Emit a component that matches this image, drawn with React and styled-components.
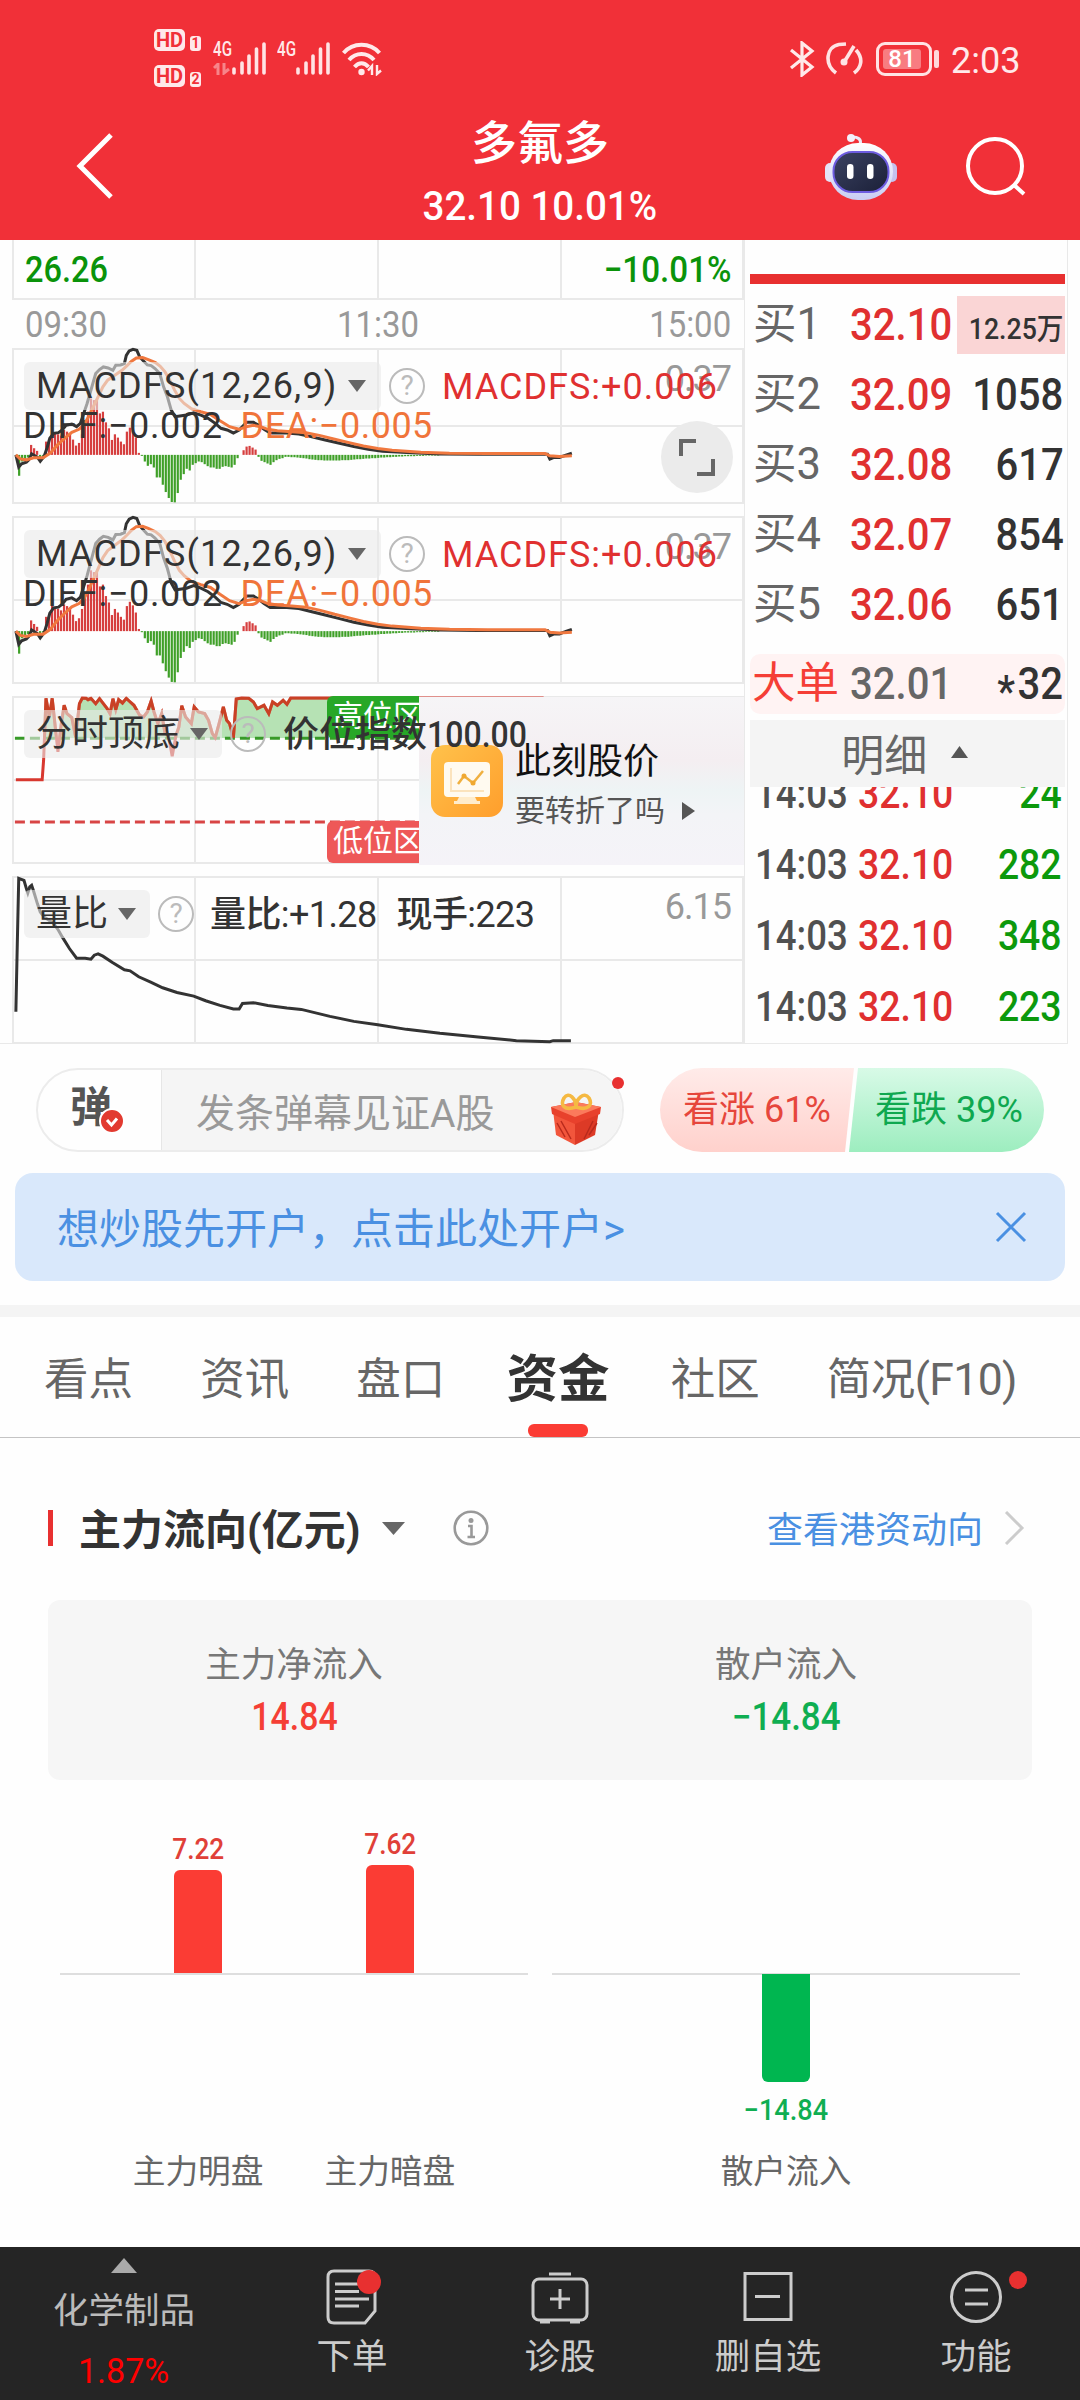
import React from 'react'
import styled, { createGlobalStyle } from 'styled-components'

const GlobalStyle = createGlobalStyle`
    * { box-sizing: border-box; }
    body {
        margin: 0;
        background: #fefefe;
        font-family: Roboto, 'Noto Sans CJK SC', sans-serif;
        color: #333;
    }
    svg { display: block; flex: none; }
`

// bar heights of the MACD histogram, one per minute
const histogram = [
    -8, -63, -20, -15, -8, 30, 20, 12, -8, -3, 40, 48, 93, 66, 62, 58, 75, 70, 64, 46, 28, 36, 62, 105,
    130, 170, 165, 168, 125, 130, 98, 80, 45, 62, 52, 40, 32, 70, 82, 72, 52, 6, -3, -20, -33, -28, -38,
    -68, -68, -90, -112, -130, -142, -143, -115, -75, -58, -42, -47, -30, -25, -20, -22, -28, -34, -38,
    -38, -42, -42, -36, -34, -36, -38, -30, -10, 0, 14, 25, 27, 22, 16, -6, -18, -22, -26, -30, -22, -16,
    -12, -10, -6, -6, -7, -7, -8, -9, -10, -11, -13, -14, -15, -16, -16, -17, -17, -17, -17, -17, -17,
    -16, -16, -16, -15, -14, -13, -13, -12, -11, -11, -10, -10, -9, -8, -8, -7, -7, -6, -6, -5, -5, -4,
    -4, -4, -4, -3, -3, -3, -2, -2, -2, -2, -2,
]

const diffLine = '33,675 39,712 45,702 55,697 60,690 66,672 72,677 78,682 84,694 92,680 98,655 104,625 112,610 122,608 130,600 138,586 150,582 160,590 168,580 175,550 182,520 188,490 194,460 200,430 208,418 216,410 226,413 236,420 242,405 252,404 260,400 264,375 270,362 278,357 286,360 292,380 300,392 308,404 316,406 324,415 334,430 342,470 350,500 358,540 366,560 376,558 390,555 405,548 420,555 435,565 450,580 462,595 475,600 488,609 500,600 508,588 516,577 530,577 540,585 552,598 565,609 600,609 625,612 650,620 680,630 710,640 740,650 770,658 800,664 850,668 920,672 1000,673 1145,673 1150,688 1160,682 1170,683 1185,675 1196,670'
const deaLine = '33,675 42,687 55,690 70,684 90,684 105,670 120,645 135,625 150,607 165,598 175,585 185,560 195,530 205,500 215,470 225,450 240,435 255,420 265,407 275,393 285,383 298,382 310,388 325,397 335,408 345,425 355,450 365,480 375,505 385,520 400,536 420,545 440,553 460,572 480,590 500,598 515,590 530,586 545,590 560,598 580,602 610,605 640,608 670,617 700,628 730,638 760,648 790,656 820,661 880,667 940,670 1020,671 1140,671 1150,678 1170,680 1196,678'
const topLine = '33,299 88,299 91,240 96,54 103,110 109,54 121,215 128,130 134,75 140,100 150,112 158,170 166,70 172,53 180,54 184,58 190,54 200,70 208,55 216,70 224,85 230,100 236,55 242,88 248,58 256,68 264,54 270,62 280,75 292,105 300,110 308,95 316,62 322,95 330,130 338,100 345,160 352,165 360,228 368,165 374,140 380,76 388,110 400,130 406,80 415,95 428,100 436,120 444,160 450,172 458,130 467,80 474,120 480,130 488,172 494,56 505,53 520,54 530,65 538,85 552,75 562,100 570,65 580,75 592,60 600,72 608,53 1137,53'
const ratioLine = '33,455 36,250 39,54 50,60 55,85 58,98 62,80 66,75 70,92 78,130 84,155 92,170 100,178 112,190 122,210 130,230 145,265 160,294 178,294 190,297 197,285 205,281 215,288 235,307 260,329 272,332 290,350 315,366 340,383 370,397 405,408 430,422 460,436 488,447 500,447 507,430 530,428 560,436 600,444 630,448 690,469 740,484 790,494 850,508 920,520 1000,531 1080,542 1150,545 1157,542 1194,542'

const bids = [
    { label: '买1', price: '32.10', qty: '12.25万', hot: true },
    { label: '买2', price: '32.09', qty: '1058' },
    { label: '买3', price: '32.08', qty: '617' },
    { label: '买4', price: '32.07', qty: '854' },
    { label: '买5', price: '32.06', qty: '651' },
]
const deals = [24, 282, 348, 223]
const tabs = ['看点', '资讯', '盘口', '资金', '社区', '简况(F10)']

const Signal = () => (
    <svg width="34" height="33" viewBox="0 0 34 33" stroke="#ffe3e4" strokeWidth="3.6" strokeLinecap="round">
        <path d="M2 27v4M10 21v10M17 14v17M24.500 7v24M32 2v29" />
    </svg>
)

const Arrow = ({ size = 18, height = 12, color = '#666', up }) => (
    <svg width={size} height={height} viewBox="0 0 10 10" preserveAspectRatio="none" fill={color}>
        <path d={up ? 'M0 10L5 0L10 10z' : 'M0 0L5 10L10 0z'} />
    </svg>
)

const Grid = ({ height }) => (
    <svg width="732" height={height} fill="none" stroke="#e9e9e9" strokeWidth="2">
        <path d={`M1 1H731V${height - 1}H1zM183 0V${height}M366 0V${height}M549 0V${height}M0 ${height / 2}H731`} />
    </svg>
)

const Macd = ({ height, expand }) => (
    <Panel $h={height}>
        <Grid height={height} />
        <Plot viewBox="27 356 1527 464" preserveAspectRatio="none">
            {histogram.map((v, i) => (
                <rect key={i} x={31.300 + i * 6.260} y={v > 0 ? 675 - v : 675} width="4.600" height={Math.abs(v)}
                    fill={v > 0 ? '#d63f3f' : '#3fa028'} />
            ))}
            <polyline points={diffLine} stroke="#333" />
            <polyline points={deaLine} stroke="#f0783f" />
        </Plot>
        <ScaleLabel>0.37</ScaleLabel>
        <Legend>
            <Chip $w={357}><Latin>MACDFS(12,26,9)</Latin><Arrow /></Chip>
            <Help>?</Help>
            <Value $color="#e03030" $ml={17} $ls={1}>MACDFS:+0.006</Value>
        </Legend>
        <SecondLine>
            <Value $ls={0.6}>DIFF:−0.002</Value>
            <Value $color="#f0743a" $ml={18} $ls={0.5}>DEA:−0.005</Value>
        </SecondLine>
        {expand && (
            <Expand>
                <svg width="36" height="38" viewBox="0 0 36 38" fill="none" stroke="#666" strokeWidth="4">
                    <path d="M2 18V3H17M34 21V36H18" />
                </svg>
            </Expand>
        )}
    </Panel>
)

function Robot() {
    return (
        <svg width="74" height="68" viewBox="0 0 74 68">
            <defs>
                <linearGradient id="shell" x1="0" y1="0" x2="0" y2="1">
                    <stop offset="0" stopColor="#fff" /><stop offset="1" stopColor="#c9cdf3" />
                </linearGradient>
                <linearGradient id="visor" x1="0" y1="0" x2="1" y2="1">
                    <stop offset="0" stopColor="#3b4262" /><stop offset="1" stopColor="#1b2038" />
                </linearGradient>
            </defs>
            <path d="M36 12C38 6 34 4 28 4" fill="none" stroke="#eceaf8" strokeWidth="3" />
            <circle cx="27" cy="5" r="4" fill="#f3f1fb" />
            <rect x="1" y="30" width="10" height="19" rx="5" fill="#e4e3f7" />
            <rect x="63" y="30" width="10" height="19" rx="5" fill="#c5c2ee" />
            <rect x="5" y="10" width="64" height="57" rx="29" fill="url(#shell)" />
            <rect x="9.500" y="19" width="55" height="40" rx="19" fill="url(#visor)" stroke="#6d5ce0" strokeWidth="2" />
            <rect x="23" y="31" width="6.500" height="15" rx="3.200" fill="#fff" />
            <rect x="43" y="31" width="6.500" height="15" rx="3.200" fill="#fff" />
        </svg>
    )
}

function Gift() {
    return (
        <svg width="50" height="54" viewBox="0 0 50 54">
            <path d="M2 18L24 27V53L5 43z" fill="#f2563c" />
            <path d="M48 18L24 27V53L44 43z" fill="#dd3a26" />
            <path d="M0 15L25 10L50 15L49 22L24 32L1 22z" fill="#e8412c" />
            <path d="M0 15L25 10L50 15L24 25z" fill="#fb7a5c" />
            <path d="M10 29L20 47M6 31L14 45M42 29L33 47M46 31L38 43" stroke="#b92a1c" strokeWidth="1.500" />
            <path d="M25 15C13 19 9 13 13 6C18 -1 25 7 25 15C25 7 33 -1 38 6C42 13 37 19 25 15z" fill="none" stroke="#f5b942" strokeWidth="3.600" />
        </svg>
    )
}

function StatusBar() {
    return (
        <Status>
            <HdStack>
                <div><Hd>HD</Hd><Sim>1</Sim></div>
                <div><Hd>HD</Hd><Sim>2</Sim></div>
            </HdStack>
            <Net>
                <span>4G</span>
                <svg width="17" height="12" viewBox="0 0 17 12" fill="none" stroke="#f7858a" strokeWidth="3"><path d="M1 5L5 1V12M11 0V10L16 6" /></svg>
            </Net>
            <Signal />
            <Net $ml={11}><span>4G</span></Net>
            <Signal />
            <Wifi width="41" height="34" viewBox="0 0 41 34" fill="none" stroke="#ffe9ea" strokeWidth="4">
                <path d="M1.500 11C11 0 28 0 37.500 11M7 18C14 10 25 10 32 18M12.500 25C17 20 22 20 26.500 25" />
                <circle cx="19.500" cy="30" r="3.200" fill="#ffe9ea" stroke="none" />
                <path d="M26 28.500L30 24V33M35 23V32L39 28.500" strokeWidth="2.400" />
            </Wifi>
            <Push />
            <svg width="26" height="36" viewBox="0 0 26 36" fill="none" stroke="#ffe9ea" strokeWidth="3.200"><path d="M2 9L23 26L13 34V2L23 10L2 27" /></svg>
            <Gauge width="37" height="34" viewBox="0 0 37 34" fill="none" stroke="#ffe3e4" strokeWidth="3.600">
                <path d="M10 31C-2 22 0 5 13 2.500L20 2M30 8C38 17 35 26 28 31" />
                <path d="M17 22L28 4" /><circle cx="18" cy="20" r="3.500" fill="#ffe3e4" stroke="none" />
            </Gauge>
            <Battery><b>81</b></Battery>
            <Nub />
            <Clock>2:03</Clock>
        </Status>
    )
}

function Charts() {
    return (
        <ChartColumn>
            <Panel $h={60}>
                <svg width="732" height="60" fill="none" stroke="#e9e9e9" strokeWidth="2"><path d="M1 0V59H731V0M183 0V60M366 0V60M549 0V60" /></svg>
                <Limits><Num $o="left">26.26</Num><Num $o="right" $w={0.91}>−10.01%</Num></Limits>
            </Panel>
            <TimeAxis><Num $o="left">09:30</Num><Num>11:30</Num><Num $o="right">15:00</Num></TimeAxis>
            <Macd height={156} expand />
            <Macd height={168} />
            <Panel $h={168}>
                <Grid height={168} />
                <Plot viewBox="27 50 1527 499" preserveAspectRatio="none">
                    <clipPath id="above"><rect x="90" y="50" width="620" height="124" /></clipPath>
                    <polygon points={`90,174 ${topLine.split(' ').slice(2, -1).join(' ')} 700,53 700,174`} fill="#b6e2b4" clipPath="url(#above)" />
                    <path d="M31 174H876" stroke="#389a28" strokeDasharray="10 5" />
                    <path d="M31 426H876" stroke="#d84545" strokeDasharray="10 5" />
                    <polyline points={topLine} stroke="#d8382f" />
                    <polyline points={topLine} stroke="#c0481f" clipPath="url(#above)" strokeOpacity=".6" />
                </Plot>
                <Zone $top={0} $bg="#27a727">高位区</Zone>
                <Zone $top={125} $bg="#ee5858">低位区</Zone>
                <Promo>
                    <svg width="72" height="72" viewBox="0 0 72 72">
                        <defs><linearGradient id="gold" x1="0" y1="0" x2="1" y2="1"><stop stopColor="#ffc24b" /><stop offset="1" stopColor="#ff9e2c" /></linearGradient></defs>
                        <rect width="72" height="72" rx="14" fill="url(#gold)" />
                        <rect x="13" y="17" width="46" height="35" rx="4" fill="#fffaf0" />
                        <path d="M28 52H44L46 56H49V59H23V56H26z" fill="#ffeccb" />
                        <path d="M20 23V46H53" fill="none" stroke="#fbe3bd" strokeWidth="2" />
                        <path d="M27 39L33 31L42 38L52 26" fill="none" stroke="#f0b040" strokeWidth="2.500" />
                        <circle cx="33" cy="31" r="2.500" fill="#f0a830" /><circle cx="42" cy="38" r="2.500" fill="#f0a830" />
                    </svg>
                    <div>
                        <h4>此刻股价</h4>
                        <p>要转折了吗<svg width="14" height="18" viewBox="0 0 14 18" fill="#555"><path d="M1 0L14 9L1 18z" /></svg></p>
                    </div>
                </Promo>
                <Legend>
                    <Chip $w={198}>分时顶底<Arrow /></Chip>
                    <Help>?</Help>
                    <Value $ml={17}>价位指数<Num $o="left">100.00</Num></Value>
                </Legend>
            </Panel>
            <Panel $h={168}>
                <Grid height={168} />
                <Plot viewBox="27 50 1527 499" preserveAspectRatio="none"><polyline points={ratioLine} stroke="#333" /></Plot>
                <ScaleLabel>6.15</ScaleLabel>
                <Legend>
                    <Chip $w={126}>量比<Arrow /></Chip>
                    <Help>?</Help>
                    <Value $ml={16} $ls={-0.6}>量比:+1.28</Value>
                    <Value $ml={20} $ls={-0.6}>现手:223</Value>
                </Legend>
            </Panel>
        </ChartColumn>
    )
}

function OrderBook() {
    return (
        <Book>
            <Meter />
            {bids.map((b) => (
                <BidRow key={b.label}>
                    <span>{b.label}</span>
                    <Num $o="left" $color="#e03030">{b.price}</Num>
                    <Qty $hot={b.hot}><Num $o="right">{b.qty}</Num></Qty>
                </BidRow>
            ))}
            <BigOrder>
                <span>大单</span>
                <Num $o="left" $color="#666">32.01</Num>
                <Qty><Num $o="right"><Star>*</Star>32</Num></Qty>
            </BigOrder>
            <Detail>明细<Arrow up color="#555" size={17} /></Detail>
            <Deals>
                {deals.map((d) => (
                    <Deal key={d}>
                        <Num $o="left" $color="#505050" $w={0.87}>14:03</Num>
                        <Num $o="left" $color="#e03030">32.10</Num>
                        <Num $o="right" $color="#0c990c">{d}</Num>
                    </Deal>
                ))}
            </Deals>
        </Book>
    )
}

function App() {
    return (
        <Page>
            <GlobalStyle />
            <Header>
                <StatusBar />
                <Nav>
                    <svg width="38" height="66" viewBox="0 0 38 66" fill="none" stroke="#fff" strokeWidth="5"><path d="M35 2L4 33L35 64" /></svg>
                    <Title><h1>多氟多</h1><Num $w={0.94}>32.10 10.01%</Num></Title>
                    <Robot />
                    <svg width="62" height="62" viewBox="0 0 62 62" fill="none" stroke="#fff" strokeWidth="4"><circle cx="30" cy="30" r="27" /><path d="M49 49L59 58" /></svg>
                </Nav>
            </Header>
            <Quote><Charts /><OrderBook /></Quote>

            <Interact>
                <Barrage>
                    <BarrageIcon>弹
                        <svg width="26" height="26" viewBox="0 0 26 26"><circle cx="13" cy="13" r="12" fill="#e23a30" stroke="#fff" strokeWidth="2" /><path d="M8 12L12.500 17L18 10.500" fill="none" stroke="#fff" strokeWidth="3" /></svg>
                    </BarrageIcon>
                    <BarrageText>发条弹幕见证A股<Gift /></BarrageText>
                    <Dot $x={574} $y={7} $s={12} />
                </Barrage>
                <Votes><Vote $up>看涨 61%</Vote><Vote>看跌 39%</Vote></Votes>
            </Interact>
            <Banner>
                <span>想炒股先开户，点击此处开户&gt;</span>
                <svg width="32" height="32" viewBox="0 0 32 32" stroke="#4a90e2" strokeWidth="3"><path d="M2 2L30 30M30 2L2 30" /></svg>
            </Banner>

            <Tabs>{tabs.map((t) => <Tab key={t} $active={t === '资金'}>{t}</Tab>)}</Tabs>

            <FlowHead>
                <i />
                <h2>主力流向(亿元)</h2>
                <Arrow size={23} height={13} />
                <svg width="36" height="36" viewBox="0 0 36 36" fill="none" stroke="#999" strokeWidth="2.600"><circle cx="18" cy="18" r="16.300" /><circle cx="18" cy="10.500" r="2.500" fill="#999" stroke="none" /><path d="M15 16H18.500V27M14.500 27H22" /></svg>
                <a>查看港资动向</a>
                <svg width="22" height="34" viewBox="0 0 22 34" fill="none" stroke="#ccc" strokeWidth="3"><path d="M3 1L19 17L3 33" /></svg>
            </FlowHead>
            <Summary>
                <Cell $color="#f53f35"><p>主力净流入</p><Num>14.84</Num></Cell>
                <Cell $color="#0fae52"><p>散户流入</p><Num $w={0.92}>−14.84</Num></Cell>
            </Summary>
            <FlowChart>
                <Group>
                    <Column><Num>7.22</Num><Bar $h={103} /></Column>
                    <Column><Num>7.62</Num><Bar $h={108} /></Column>
                </Group>
                <Group>
                    <Column $down><Bar $down $h={108} /><Num $w={0.92}>−14.84</Num></Column>
                </Group>
            </FlowChart>
            <Names>
                <div><span>主力明盘</span><span>主力暗盘</span></div>
                <div><span>散户流入</span></div>
            </Names>

            <Bottom>
                <Sector><Arrow up size={26} height={15} color="#aaa" /><p>化学制品</p><Num $w={0.96}>1.87%</Num></Sector>
                <Action>
                    <svg width="52" height="56" viewBox="0 0 52 56" fill="none" stroke="#ccc" strokeWidth="3">
                        <path d="M8 2H43Q49 2 49 8V42L39 54H8Q2 54 2 48V8Q2 2 8 2z" />
                        <path d="M9 15H33M9 22.500H33M9 30H43M9 37H33" />
                    </svg>
                    下单
                    <Dot $x={109} $y={23} $s={24} />
                </Action>
                <Action>
                    <svg width="58" height="56" viewBox="0 0 58 56" fill="none" stroke="#ccc" strokeWidth="3">
                        <rect x="2" y="10" width="54" height="41" rx="6" /><path d="M18 5H40M29 20V40M19 30H39M9 53H19M39 53H49" />
                    </svg>
                    诊股
                </Action>
                <Action>
                    <svg width="50" height="56" viewBox="0 0 50 56" fill="none" stroke="#ccc" strokeWidth="3"><rect x="2" y="4.500" width="46" height="46" /><path d="M12 27.500H37" /></svg>
                    删自选
                </Action>
                <Action>
                    <svg width="54" height="56" viewBox="0 0 54 56" fill="none" stroke="#ccc" strokeWidth="3"><circle cx="27" cy="28" r="24.500" /><path d="M16 21H39M16 35H39" /></svg>
                    功能
                    <Dot $x={137} $y={24} $s={18} />
                </Action>
            </Bottom>
        </Page>
    )
}

const Num = styled.span`
    display: inline-block;
    white-space: nowrap;
    font-weight: 500;
    color: ${(p) => p.$color || 'inherit'};
    transform: scaleX(${(p) => p.$w || 0.89});
    transform-origin: ${(p) => p.$o || 'center'};
`
const Latin = styled.span`letter-spacing: 1.200px;`

const Page = styled.div`
    display: flex;
    flex-direction: column;
    width: 1080px;
    height: 2400px;
    overflow: hidden;
`
const Header = styled.header`
    flex: none;
    height: 240px;
    background: #f13038;
    color: #fff;
`
const Status = styled.div`
    display: flex;
    align-items: center;
    height: 117px;
    padding-left: 154px;
    color: #ffe9ea;
`
const HdStack = styled.div`
    display: flex;
    flex-direction: column;
    gap: 14px;
    width: 59px;
    padding-bottom: 2px;
    div { display: flex; gap: 5px; align-items: flex-end; }
`
const Hd = styled.span`
    width: 31px;
    height: 22px;
    border-radius: 5px;
    background: #ffe9ea;
    color: #f13038;
    font: 700 20px/22px Roboto;
    text-align: center;
`
const Sim = styled(Hd)`
    width: 11px;
    height: 15px;
    border-radius: 3px;
    font-size: 14px;
    line-height: 15px;
`
const Net = styled.div`
    width: 19px;
    height: 33px;
    margin-left: ${(p) => p.$ml || 0}px;
    font: 500 20px/15px Roboto;
    span { display: block; transform: scaleX(.76); transform-origin: left; margin-bottom: 6px; }
`
const Wifi = styled.svg`margin-left: 12px;`
const Push = styled.div`flex: 1;`
const Gauge = styled.svg`margin-left: 11px;`
const Battery = styled.div`
    display: flex;
    width: 56px;
    height: 34px;
    margin-left: 13px;
    padding: 4px;
    border: 3px solid #ffe3e4;
    border-radius: 9px;
    b {
        width: 38px;
        border-radius: 3px;
        background: #f87c81;
        color: #fff;
        font: 500 24px/21px Roboto;
        text-align: center;
    }
`
const Nub = styled.div`
    width: 5px;
    height: 18px;
    margin: 0 12px 0 2px;
    border-radius: 2px;
    background: #ffd9db;
`
const Clock = styled.div`
    width: 129px;
    font-size: 36px;
    line-height: 40px;
    padding-top: 4px;
`
const Nav = styled.div`
    display: flex;
    align-items: center;
    height: 123px;
    padding: 0 53px 24px 76px;
    > svg:first-child { margin-top: -2px; }
    > svg:nth-of-type(2) { margin-right: 67px; }
`
const Title = styled.div`
    flex: 1;
    padding: 10px 0 0 142px;
    text-align: center;
    font-size: 41px;
    line-height: 48px;
    h1 { margin: 0 0 9px; font-size: 46px; line-height: 60px; font-weight: 500; }
`
const Quote = styled.section`
    display: flex;
    flex: none;
    height: 804px;
    width: 1068px;
    padding-left: 12px;
    border-right: 1px solid #e9e9e9;
    border-bottom: 1px solid #e9e9e9;
`
const ChartColumn = styled.div`
    display: flex;
    flex-direction: column;
    gap: 12px;
    width: 733px;
    border-right: 1px solid #e9e9e9;
`
const Panel = styled.div`
    position: relative;
    flex: none;
    height: ${(p) => p.$h}px;
`
const Plot = styled.svg`
    position: absolute;
    left: 1px;
    top: 1px;
    width: 730px;
    height: calc(100% - 2px);
    fill: none;
    overflow: visible;
    polyline, path { stroke-width: 3px; vector-effect: non-scaling-stroke; }
`
const Limits = styled.div`
    position: absolute;
    inset: 8px 12px 0 13px;
    display: flex;
    justify-content: space-between;
    font-size: 36.500px;
    line-height: 44px;
    color: #0a930a;
`
const TimeAxis = styled.div`
    display: flex;
    justify-content: space-between;
    height: 24px;
    margin: 0 13px;
    font-size: 37px;
    line-height: 26px;
    color: #999;
    ${Num} { font-weight: 400; }
`
const ScaleLabel = styled.span`
    position: absolute;
    right: 13px;
    top: 13px;
    font-size: 36px;
    line-height: 36px;
    letter-spacing: -1px;
    color: #999;
`
const Legend = styled.div`
    position: absolute;
    left: 12px;
    top: 12px;
    display: flex;
    align-items: center;
    white-space: nowrap;
    font-size: 36px;
    line-height: 50px;
`
const Chip = styled.div`
    display: flex;
    align-items: center;
    gap: 10px;
    width: ${(p) => p.$w}px;
    height: 48px;
    padding-left: 12px;
    border-radius: 6px;
    background: rgba(234, 234, 234, .6);
`
const Help = styled.span`
    width: 36px;
    height: 36px;
    margin-left: 8px;
    border: 2.500px solid #bbb;
    border-radius: 50%;
    color: #bbb;
    font-size: 28px;
    line-height: 31px;
    text-align: center;
`
const Value = styled.span`
    font-weight: 450;
    padding-top: 2px;
    color: ${(p) => p.$color || '#333'};
    margin-left: ${(p) => p.$ml || 0}px;
    letter-spacing: ${(p) => p.$ls || 0}px;
`
const SecondLine = styled.div`
    position: absolute;
    left: 11px;
    top: 55px;
    font-size: 36px;
    line-height: 46px;
    white-space: nowrap;
`
const Expand = styled.div`
    position: absolute;
    right: 11px;
    top: 73px;
    display: grid;
    place-items: center;
    width: 72px;
    height: 72px;
    border-radius: 50%;
    background: #ebebeb;
`
const Zone = styled.div`
    position: absolute;
    left: 315px;
    top: ${(p) => p.$top}px;
    width: 92px;
    height: 42px;
    padding-left: 6px;
    overflow: hidden;
    white-space: nowrap;
    border-radius: 6px 0 0 6px;
    background: ${(p) => p.$bg};
    color: #fff;
    font-size: 30px;
    line-height: 40px;
`
const Promo = styled.div`
    position: absolute;
    left: 407px;
    top: 1px;
    display: flex;
    align-items: center;
    gap: 12px;
    width: 325px;
    height: 168px;
    padding-left: 12px;
    background: linear-gradient(#f6f5f7, #f4eef1 38%, #eef4f5 56%, #f3f4f7 70%, #f5f3f8);
    h4 { margin: 8px 0 11px; font-size: 36px; line-height: 40px; font-weight: 400; color: #111; }
    p { display: flex; align-items: center; gap: 16px; margin: 0; font-size: 30px; line-height: 36px; color: #555; }
`
const Book = styled.div`
    flex: 1;
    padding: 34px 5px 0 5px;
`
const Meter = styled.div`
    height: 10px;
    margin-bottom: 12px;
    background: #e83030;
`
const BidRow = styled.div`
    display: grid;
    grid-template-columns: 100px 105px 1fr;
    align-items: center;
    height: 58px;
    margin-bottom: 12px;
    font-size: 45px;
    line-height: 58px;
    white-space: nowrap;
    color: #666;
    > span:first-child { padding-left: 3px; font-size: 43.500px; }
`
const Qty = styled.div`
    height: 58px;
    padding-right: 1px;
    text-align: right;
    color: #333;
    direction: rtl;
    ${(p) => p.$hot && 'background: #fad5d5; font-size: 30px; line-height: 66px; margin-left: 2px;'}
    span { direction: ltr; }
`
const Star = styled.span`position: relative; top: 8px; margin-right: 3px;`
const BigOrder = styled(BidRow)`
    height: 60px;
    margin: 20px 0 6px;
    border-radius: 10px;
    background: #fff3f3;
    > span:first-child { color: #f53e36; padding-left: 2px; }
`
const Detail = styled.div`
    display: flex;
    align-items: center;
    justify-content: center;
    gap: 24px;
    height: 67px;
    padding: 0 5px 3px 0;
    background: #f4f4f4;
    color: #666;
    font-size: 43px;
`
const Deals = styled.div`
    display: flex;
    flex-direction: column;
    justify-content: flex-end;
    height: 255px;
    overflow: hidden;
`
const Deal = styled.div`
    display: grid;
    grid-template-columns: 103px 1fr auto;
    flex: none;
    height: 71px;
    padding: 0 3px 0 5px;
    font-size: 42px;
    line-height: 71px;
`
const Interact = styled.div`
    display: flex;
    flex: none;
    gap: 36px;
    padding: 24px 36px 0;
    height: 129px;
`
const Barrage = styled.div`
    position: relative;
    display: flex;
    width: 588px;
    height: 84px;
    border: 2px solid #ececec;
    border-radius: 42px;
`
const BarrageIcon = styled.div`
    position: relative;
    width: 124px;
    padding-left: 32px;
    font-size: 42px;
    font-weight: 700;
    line-height: 76px;
    color: #555;
    border-right: 1px solid #e6e6e6;
    svg { position: absolute; left: 61px; top: 38px; }
`
const BarrageText = styled.div`
    display: flex;
    flex: 1;
    align-items: center;
    justify-content: space-between;
    padding: 0 21px 0 34px;
    border-radius: 0 40px 40px 0;
    background: #f5f5f5;
    color: #999;
    font-size: 39px;
    svg { margin-top: 18px; }
`
const Dot = styled.i`
    position: absolute;
    left: ${(p) => p.$x}px;
    top: ${(p) => p.$y}px;
    width: ${(p) => p.$s}px;
    height: ${(p) => p.$s}px;
    border-radius: 50%;
    background: #e83030;
`
const Votes = styled.div`
    display: flex;
    width: 384px;
    height: 84px;
    overflow: hidden;
    border-radius: 42px;
`
const Vote = styled.div`
    flex: none;
    width: ${(p) => (p.$up ? 194 : 195)}px;
    margin-left: ${(p) => (p.$up ? 0 : -5)}px;
    padding-left: ${(p) => (p.$up ? 23 : 26)}px;
    clip-path: ${(p) => (p.$up ? 'polygon(0 0, 100% 0, 185px 100%, 0 100%)' : 'polygon(9px 0, 100% 0, 100% 100%, 0 100%)')};
    background: ${(p) => (p.$up ? 'linear-gradient(#ffebe9, #ffd1cc)' : 'linear-gradient(#d8fae7, #9dedbf)')};
    color: ${(p) => (p.$up ? '#e6463c' : '#0fa850')};
    font-size: 36px;
    line-height: 84px;
    white-space: nowrap;
`
const Banner = styled.div`
    display: flex;
    flex: none;
    align-items: center;
    justify-content: space-between;
    height: 108px;
    margin: 0 15px 24px;
    padding: 0 38px 0 42px;
    border-radius: 18px;
    background: #d9e8fb;
    color: #4a90e2;
    font-size: 42px;
    span { padding-bottom: 3px; }
`
const Tabs = styled.div`
    display: flex;
    flex: none;
    justify-content: space-between;
    height: 133px;
    padding: 0 63px 0 44px;
    border-top: 12px solid #f4f4f4;
    border-bottom: 1px solid #c4c4c4;
`
const Tab = styled.div`
    display: flex;
    flex-direction: column;
    align-items: center;
    font-size: ${(p) => (p.$active ? 51.5 : 44.5)}px;
    font-weight: ${(p) => (p.$active ? 700 : 400)};
    line-height: 126px;
    color: ${(p) => (p.$active ? '#333' : '#666')};
    &:last-child { letter-spacing: -.6px; }
    ${(p) => p.$active && `
        margin: 0 -6px;
        &::after {
            content: '';
            width: 60px;
            height: 13px;
            margin-top: -19px;
            border-radius: 6px;
            background: #fb3c34;
        }
    `}
`
const FlowHead = styled.div`
    display: flex;
    flex: none;
    align-items: center;
    height: 162px;
    padding: 18px 55px 0 48px;
    i { width: 5px; height: 36px; background: #e83030; }
    h2 { margin: 0 22px 4px 26px; font-size: 42px; font-weight: 700; white-space: nowrap; }
    svg + svg { margin-left: 48px; }
    a { margin: 0 20px 3px auto; font-size: 36px; color: #4a90e2; }
`
const Summary = styled.div`
    display: flex;
    flex: none;
    height: 180px;
    margin: 0 48px;
    padding-top: 40px;
    border-radius: 12px;
    background: #f6f6f6;
`
const Cell = styled.div`
    flex: 1;
    text-align: center;
    color: ${(p) => p.$color};
    font-size: 38px;
    line-height: 54px;
    p { margin: 0; font-size: 35.500px; line-height: 50px; color: #777; }
`
const FlowChart = styled.div`
    display: grid;
    grid-template-columns: 468px 468px;
    gap: 24px;
    flex: none;
    height: 362px;
    padding: 0 60px;
`
const Group = styled.div`
    display: flex;
    justify-content: center;
    gap: 72px;
    height: 195px;
    border-bottom: 2px solid #dedede;
`
const Column = styled.div`
    display: flex;
    flex-direction: column;
    align-items: center;
    justify-content: ${(p) => (p.$down ? 'flex-start' : 'flex-end')};
    width: 120px;
    margin-top: ${(p) => (p.$down ? 194 : 0)}px;
    color: ${(p) => (p.$down ? '#0fae52' : '#e04038')};
    font-size: 29.500px;
    line-height: 41px;
    ${Num} { padding-top: ${(p) => (p.$down ? 8 : 0)}px; }
`
const Bar = styled.div`
    flex: none;
    width: 48px;
    height: ${(p) => p.$h}px;
    border-radius: ${(p) => (p.$down ? '0 0 6px 6px' : '6px 6px 0 0')};
    background: ${(p) => (p.$down ? '#00b650' : '#fb3c34')};
`
const Names = styled.div`
    display: grid;
    grid-template-columns: 468px 468px;
    gap: 24px;
    padding: 6px 60px 0;
    font-size: 32.700px;
    line-height: 48px;
    color: #666;
    div { display: flex; justify-content: center; gap: 61px; }
`
const Bottom = styled.nav`
    display: flex;
    flex: none;
    height: 153px;
    margin-top: auto;
    background: #252525;
    color: #ccc;
    font-size: 35.500px;
`
const Sector = styled.div`
    display: flex;
    flex-direction: column;
    align-items: center;
    width: 248px;
    padding-top: 11px;
    color: #f00;
    p { margin: 14px 0 24px; line-height: 48px; color: #bbb; }
    ${Num} { font-weight: 400; line-height: 24px; }
`
const Action = styled.div`
    position: relative;
    display: flex;
    flex-direction: column;
    align-items: center;
    gap: 7px;
    width: 208px;
    padding-top: 22px;
    line-height: 50px;
`

export default App
